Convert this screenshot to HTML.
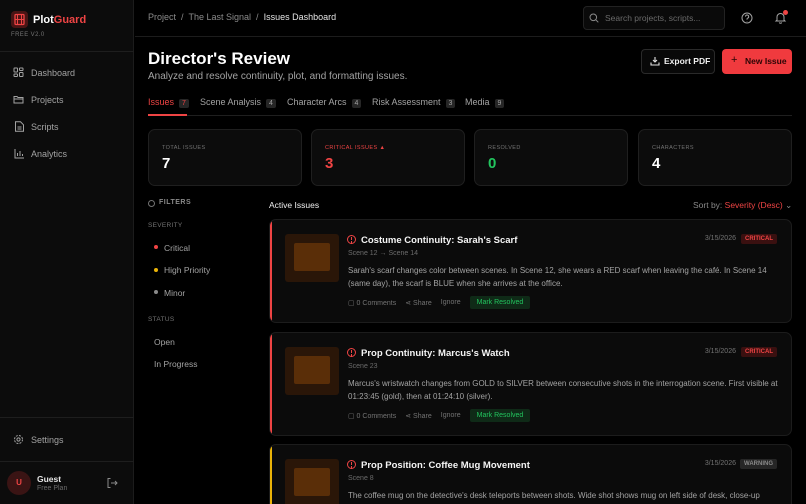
<!DOCTYPE html>
<html style="overflow:hidden;width:806px;height:504px"><head><meta charset="utf-8"><style>
*{box-sizing:border-box;margin:0;padding:0}
body{width:806px;height:504px;overflow:hidden;background:#000;font-family:"Liberation Sans",sans-serif;color:#e5e5e5;position:relative}
.a{position:absolute;white-space:nowrap}
.side{position:absolute;left:0;top:0;width:134px;height:504px;background:#0c0c0c;border-right:1px solid #1c1c1c}
.hr{position:absolute;left:0;width:134px;height:1px;background:#1e1e1e}
.nav{font-size:9px;color:#a3a3a3}
svg{display:block}
.card{position:absolute;background:#0c0c0c;border:1px solid #1f1f1f;border-radius:7px}
.lbl{font-size:5.5px;letter-spacing:.4px;color:#737373}
.val{font-size:15px;font-weight:bold}
.tab{font-size:9px;color:#a3a3a3}
.bd{display:inline-block;background:#262626;color:#a3a3a3;font-size:7px;padding:1px 3px;border-radius:2px;margin-left:5px}
.issue{position:absolute;left:269px;width:523px;background:#0b0b0b;border:1px solid #1c1c1c;border-radius:7px;overflow:hidden}
.issue .bar{position:absolute;left:0;top:0;bottom:0;width:2px}
.thumb{position:absolute;left:15px;top:14px;width:54px;height:48px;background:#2a1608;border-radius:3px}
.thumb div{position:absolute;left:9px;top:9px;width:36px;height:28px;background:#5a2e08;border-radius:2px}
.ttl{position:absolute;left:77px;top:15px;font-size:9.5px;font-weight:bold;color:#f5f5f5}
.ttl i{display:inline-block;width:9px;height:9px;border:1.2px solid #ef4444;border-radius:50%;margin-right:5px;vertical-align:-1px;position:relative}
.ttl i:after{content:"";position:absolute;left:2.8px;top:1.3px;width:1.2px;height:3px;background:#ef4444;box-shadow:0 4px 0 -0px #ef4444}
.meta{position:absolute;left:78px;top:30px;font-size:7px;color:#6b6b6b}
.desc{position:absolute;left:78px;top:44px;width:435px;font-size:8px;line-height:13px;color:#a3a3a3;white-space:normal}
.act{position:absolute;left:78px;top:76px;font-size:7px;color:#737373;display:flex;align-items:center;gap:9px}
.mr{background:#0f2a17;color:#22c55e;padding:3px 7px;border-radius:2px}
.date{position:absolute;right:55px;top:15px;font-size:7px;color:#737373}
.tag{position:absolute;right:14px;top:14px;font-size:6px;font-weight:bold;padding:2px 4px;border-radius:2px}
</style></head><body>
<div class="side">
 <div class="a" style="left:11px;top:11px;width:17px;height:17px;background:#4a1515;border-radius:4px"><svg width="17" height="17" viewBox="0 0 17 17"><rect x="4" y="3.5" width="9" height="10" rx="1" fill="none" stroke="#ef4444" stroke-width="1.3"/><path d="M6.5 3.5v10M10.5 3.5v10M4 8.5h9" stroke="#ef4444" stroke-width="1"/></svg></div>
 <div class="a" style="left:33px;top:14px;font-size:11px;font-weight:bold;color:#fff">Plot<span style="color:#ef4444">Guard</span></div>
 <div class="a" style="left:11px;top:32px;font-size:6px;color:#737373;letter-spacing:.4px">FREE V2.0</div>
 <div class="hr" style="top:51px"></div>
 <svg class="a" style="left:13px;top:67px" width="11" height="11" viewBox="0 0 11 11" fill="none" stroke="#a3a3a3" stroke-width="1"><rect x="1" y="1" width="3.5" height="4" rx=".6"/><rect x="6.5" y="1" width="3.5" height="2.5" rx=".6"/><rect x="6.5" y="5.5" width="3.5" height="4" rx=".6"/><rect x="1" y="7" width="3.5" height="2.5" rx=".6"/></svg>
 <div class="a nav" style="left:31px;top:68px">Dashboard</div>
 <svg class="a" style="left:13px;top:94px" width="11" height="11" viewBox="0 0 11 11" fill="none" stroke="#a3a3a3" stroke-width="1"><path d="M1 2.5h3l1 1h5v5.5H1z"/><path d="M1 5h9"/></svg>
 <div class="a nav" style="left:31px;top:95px">Projects</div>
 <svg class="a" style="left:14px;top:121px" width="11" height="11" viewBox="0 0 11 11" fill="none" stroke="#a3a3a3" stroke-width="1"><path d="M1.5 .8h5l3 3v6.5h-8z"/><path d="M3.5 6h4M3.5 8h4"/></svg>
 <div class="a nav" style="left:31px;top:122px">Scripts</div>
 <svg class="a" style="left:14px;top:148px" width="11" height="11" viewBox="0 0 11 11" fill="none" stroke="#a3a3a3" stroke-width="1"><path d="M1 1v9h9M3.5 8V5M6 8V3M8.5 8V6"/></svg>
 <div class="a nav" style="left:31px;top:149px">Analytics</div>
 <div class="hr" style="top:417px"></div>
 <svg class="a" style="left:13px;top:434px" width="11" height="11" viewBox="0 0 11 11" fill="none" stroke="#a3a3a3" stroke-width="1"><circle cx="5.5" cy="5.5" r="1.6"/><circle cx="5.5" cy="5.5" r="4" stroke-dasharray="2 1.2"/></svg>
 <div class="a nav" style="left:31px;top:435px">Settings</div>
 <div class="hr" style="top:461px"></div>
 <div class="a" style="left:7px;top:471px;width:24px;height:24px;border-radius:50%;background:#3a1414;color:#ef4444;font-size:8px;font-weight:bold;text-align:center;line-height:24px">U</div>
 <div class="a" style="left:37px;top:474px;font-size:8.5px;font-weight:bold;color:#e5e5e5">Guest</div>
 <div class="a" style="left:37px;top:485px;font-size:7px;color:#6b6b6b">Free Plan</div>
 <svg class="a" style="left:106px;top:477px" width="12" height="12" viewBox="0 0 12 12" fill="none" stroke="#8a8a8a" stroke-width="1"><path d="M4.5 1.5H2v9h2.5M5 6h6M9 4l2 2-2 2"/></svg>
</div>
<div class="a" style="left:135px;top:36px;width:671px;height:1px;background:#1c1c1c"></div>
<div class="a" style="left:148px;top:12px;font-size:9px;color:#8a8a8a">Project&nbsp;&nbsp;/&nbsp;&nbsp;The Last Signal&nbsp;&nbsp;/&nbsp;&nbsp;<span style="color:#e5e5e5">Issues Dashboard</span></div>
<div class="a" style="left:583px;top:6px;width:142px;height:24px;background:#0a0a0a;border:1px solid #222;border-radius:4px"></div>
<svg class="a" style="left:589px;top:13px" width="10" height="10" viewBox="0 0 10 10" fill="none" stroke="#8a8a8a" stroke-width="1"><circle cx="4.3" cy="4.3" r="3.3"/><path d="M6.8 6.8l2.5 2.5"/></svg>
<div class="a" style="left:605px;top:13px;font-size:8.5px;color:#6b6b6b">Search projects, scripts...</div>
<svg class="a" style="left:741px;top:12px" width="12" height="12" viewBox="0 0 12 12" fill="none" stroke="#a3a3a3" stroke-width="1"><circle cx="6" cy="6" r="5"/><path d="M4.5 4.6a1.6 1.6 0 1 1 2 1.6c-.4.2-.5.5-.5 1v.4M6 9v.4"/></svg>
<svg class="a" style="left:774px;top:11px" width="13" height="13" viewBox="0 0 13 13" fill="none" stroke="#a3a3a3" stroke-width="1"><path d="M3 9V6a3.5 3.5 0 0 1 7 0v3l1 1H2zM5.3 11.5a1.3 1.3 0 0 0 2.4 0"/></svg>
<div class="a" style="left:783px;top:10px;width:5px;height:5px;border-radius:50%;background:#ef4444"></div>

<div class="a" style="left:148px;top:49px;font-size:17px;font-weight:bold;color:#fff">Director's Review</div>
<div class="a" style="left:148px;top:71px;font-size:10px;color:#a3a3a3">Analyze and resolve continuity, plot, and formatting issues.</div>
<div class="a" style="left:641px;top:49px;width:74px;height:25px;border:1px solid #2a2a2a;border-radius:4px;background:#080808"></div>
<svg class="a" style="left:650px;top:56px" width="10" height="10" viewBox="0 0 10 10" fill="none" stroke="#e5e5e5" stroke-width="1.1"><path d="M5 1v5M3 4l2 2 2-2M1 6.5V9h8V6.5"/></svg>
<div class="a" style="left:664px;top:56px;font-size:8.5px;font-weight:bold;color:#f0f0f0">Export PDF</div>
<div class="a" style="left:722px;top:49px;width:70px;height:25px;border-radius:4px;background:#f03a3e"></div>
<div class="a" style="left:731px;top:54px;font-size:11px;color:#2a0505">+</div>
<div class="a" style="left:745px;top:56px;font-size:8.5px;font-weight:bold;color:#2a0505">New Issue</div>

<div class="a tab" style="left:148px;top:97px;color:#ef4444">Issues<span class="bd" style="color:#ef4444">7</span></div>
<div class="a tab" style="left:200px;top:97px">Scene Analysis<span class="bd">4</span></div>
<div class="a tab" style="left:287px;top:97px">Character Arcs<span class="bd">4</span></div>
<div class="a tab" style="left:372px;top:97px">Risk Assessment<span class="bd">3</span></div>
<div class="a tab" style="left:465px;top:97px">Media<span class="bd">9</span></div>
<div class="a" style="left:148px;top:115px;width:644px;height:1px;background:#1f1f1f"></div>
<div class="a" style="left:148px;top:114px;width:39px;height:2px;background:#ef4444"></div>

<div class="card" style="left:148px;top:129px;width:154px;height:57px"><div class="a lbl" style="left:13px;top:15px">TOTAL ISSUES</div><div class="a val" style="left:13px;top:25px;color:#fff">7</div></div>
<div class="card" style="left:311px;top:129px;width:154px;height:57px"><div class="a lbl" style="left:13px;top:15px;color:#ef4444">CRITICAL ISSUES ▲</div><div class="a val" style="left:13px;top:25px;color:#ef4444">3</div></div>
<div class="card" style="left:474px;top:129px;width:154px;height:57px"><div class="a lbl" style="left:13px;top:15px">RESOLVED</div><div class="a val" style="left:13px;top:25px;color:#22c55e">0</div></div>
<div class="card" style="left:638px;top:129px;width:154px;height:57px"><div class="a lbl" style="left:13px;top:15px">CHARACTERS</div><div class="a val" style="left:13px;top:25px;color:#fff">4</div></div>

<div class="a" style="left:148px;top:200px;width:7px;height:7px;border:1px solid #737373;border-radius:50%"></div>
<div class="a" style="left:159px;top:199px;font-size:7px;font-weight:bold;color:#8a8a8a;letter-spacing:.5px">FILTERS</div>
<div class="a" style="left:148px;top:222px;font-size:6.5px;color:#737373;letter-spacing:.3px">SEVERITY</div>
<div class="a" style="left:154px;top:245px;width:4px;height:4px;border-radius:50%;background:#ef4444"></div>
<div class="a" style="left:164px;top:243px;font-size:8.5px;color:#a3a3a3">Critical</div>
<div class="a" style="left:154px;top:268px;width:4px;height:4px;border-radius:50%;background:#eab308"></div>
<div class="a" style="left:164px;top:265px;font-size:8.5px;color:#a3a3a3">High Priority</div>
<div class="a" style="left:154px;top:290px;width:4px;height:4px;border-radius:50%;background:#8a8a8a"></div>
<div class="a" style="left:164px;top:288px;font-size:8.5px;color:#a3a3a3">Minor</div>
<div class="a" style="left:148px;top:316px;font-size:6.5px;color:#737373;letter-spacing:.3px">STATUS</div>
<div class="a" style="left:154px;top:337px;font-size:8.5px;color:#a3a3a3">Open</div>
<div class="a" style="left:154px;top:359px;font-size:8.5px;color:#a3a3a3">In Progress</div>

<div class="a" style="left:269px;top:200px;font-size:8.5px;color:#f0f0f0">Active Issues</div>
<div class="a" style="left:693px;top:200px;font-size:8.5px;color:#8a8a8a">Sort by: <span style="color:#ef4444">Severity (Desc)</span> ⌄</div>

<div class="issue" style="top:219px;height:104px"><div class="bar" style="background:#ef4444"></div>
 <div class="thumb"><div></div></div>
 <div class="ttl"><i></i>Costume Continuity: Sarah's Scarf</div>
 <div class="meta">Scene 12 → Scene 14</div>
 <div class="desc">Sarah's scarf changes color between scenes. In Scene 12, she wears a RED scarf when leaving the café. In Scene 14 (same day), the scarf is BLUE when she arrives at the office.</div>
 <div class="act"><span>▢ 0 Comments</span><span>⋖ Share</span><span>Ignore</span><span class="mr">Mark Resolved</span></div>
 <div class="date">3/15/2026</div><div class="tag" style="background:#3a1010;color:#ef4444">CRITICAL</div>
</div>
<div class="issue" style="top:332px;height:104px"><div class="bar" style="background:#ef4444"></div>
 <div class="thumb"><div></div></div>
 <div class="ttl"><i></i>Prop Continuity: Marcus's Watch</div>
 <div class="meta">Scene 23</div>
 <div class="desc">Marcus's wristwatch changes from GOLD to SILVER between consecutive shots in the interrogation scene. First visible at 01:23:45 (gold), then at 01:24:10 (silver).</div>
 <div class="act"><span>▢ 0 Comments</span><span>⋖ Share</span><span>Ignore</span><span class="mr">Mark Resolved</span></div>
 <div class="date">3/15/2026</div><div class="tag" style="background:#3a1010;color:#ef4444">CRITICAL</div>
</div>
<div class="issue" style="top:444px;height:60px;border-bottom:none;border-radius:7px 7px 0 0"><div class="bar" style="background:#eab308"></div>
 <div class="thumb"><div></div></div>
 <div class="ttl"><i></i>Prop Position: Coffee Mug Movement</div>
 <div class="meta">Scene 8</div>
 <div class="desc">The coffee mug on the detective's desk teleports between shots. Wide shot shows mug on left side of desk, close-up shows it on the right.</div>
 <div class="date">3/15/2026</div><div class="tag" style="background:#262626;color:#8a8a8a">WARNING</div>
</div>
</body></html>
